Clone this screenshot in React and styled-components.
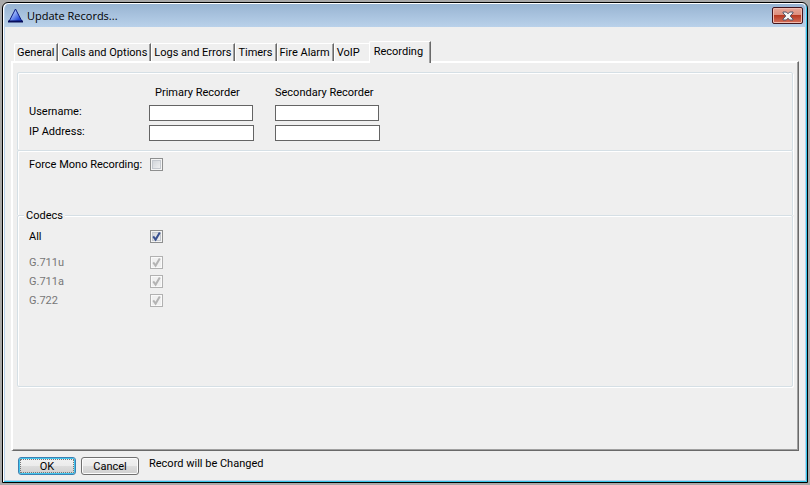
import { useState } from "react";
import styled, { createGlobalStyle, css } from "styled-components";

const TABS = [
  "General",
  "Calls and Options",
  "Logs and Errors",
  "Timers",
  "Fire Alarm",
  "VoIP",
  "Recording",
];

const CODECS = ["G.711u", "G.711a", "G.722"];

//checkbox with the tick drawn over the real input
const Check = ({ id, ...props }) => (
  <CheckBox>
    <CheckInput type="checkbox" id={id} {...props} />
    <Tick viewBox="0 0 13 13" aria-hidden="true">
      <path d="M3.2 6.4 L5.6 9.6 L9.8 2.6" />
    </Tick>
  </CheckBox>
);

const App = () => {
  const [tab, setTab] = useState("Recording");
  const [mono, setMono] = useState(false);
  const [all, setAll] = useState(true);

  return (
    <>
      <GlobalStyle />
      <Desktop>
        <Window>
          <TitleBar>
            <Logo viewBox="0 0 15 15" aria-hidden="true">
              <defs>
                <linearGradient id="logo" x1="0" y1="0" x2="1" y2="1">
                  <stop offset="0.3" stopColor="#a9c4ff" />
                  <stop offset="0.8" stopColor="#2449d8" />
                </linearGradient>
              </defs>
              <path d="M7.5 1 L14 13.5 H1 Z" fill="url(#logo)" />
              <path d="M7.5 1 L14 13.5 H1 Z" fill="none" stroke="#0a1a80" />
              <path d="M0 13.5 H15" stroke="#060e5c" strokeWidth="2" />
            </Logo>
            <Title>Update Records...</Title>
            <CloseButton type="button" aria-label="Close">
              <svg width="12" height="10" viewBox="0 0 12 10">
                <path
                  d="M1 1 H4.3 L6 2.8 L7.7 1 H11 V2 L8.2 5 L11 8 V9 H7.7 L6 7.2 L4.3 9 H1 V8 L3.8 5 L1 2 Z"
                  fill="#f4f4f4"
                  stroke="#54576a"
                />
              </svg>
            </CloseButton>
          </TitleBar>

          <TabList role="tablist">
            {TABS.map((name) => (
              <Tab
                key={name}
                type="button"
                role="tab"
                aria-selected={tab === name}
                $active={tab === name}
                onClick={() => setTab(name)}
              >
                {name}
              </Tab>
            ))}
          </TabList>

          <Panel role="tabpanel">
            <Group>
              <RecorderGrid>
                <span />
                <ColumnTitle>Primary Recorder</ColumnTitle>
                <ColumnTitle>Secondary Recorder</ColumnTitle>
                <Label htmlFor="user1">Username:</Label>
                <Field id="user1" />
                <Field id="user2" aria-label="Secondary username" />
                <Label htmlFor="ip1">IP Address:</Label>
                <Field id="ip1" $wide />
                <Field id="ip2" $wide aria-label="Secondary IP address" />
              </RecorderGrid>
            </Group>

            <MonoGroup>
              <Row>
                <Label htmlFor="mono">Force Mono Recording:</Label>
                <Check
                  id="mono"
                  checked={mono}
                  onChange={() => setMono(!mono)}
                />
              </Row>
            </MonoGroup>

            <CodecGroup>
              <Legend>Codecs</Legend>
              <Row>
                <Label htmlFor="all">All</Label>
                <Check id="all" checked={all} onChange={() => setAll(!all)} />
              </Row>
              <CodecList>
                {CODECS.map((codec) => (
                  <Row key={codec}>
                    <Label htmlFor={codec} $disabled>
                      {codec}
                    </Label>
                    <Check id={codec} checked disabled readOnly />
                  </Row>
                ))}
              </CodecList>
            </CodecGroup>
          </Panel>

          <Footer>
            <Button type="submit" $primary>
              OK
            </Button>
            <Button type="button">Cancel</Button>
            <Status>Record will be Changed</Status>
          </Footer>
        </Window>
      </Desktop>
    </>
  );
};
export default App;

const GlobalStyle = createGlobalStyle`
  * {
    box-sizing: border-box;
  }
  body {
    margin: 0;
    font-family: Roboto, "Liberation Sans", sans-serif;
    font-size: 11px;
    line-height: 13px;
    color: #000;
  }
  button, input {
    font: inherit;
    color: inherit;
  }
`;

const Desktop = styled.div`
  display: flex;
  min-height: 100vh;
  padding: 2px;
  background-color: #a9a9a9;
`;

//black frame, with a thin glass edge inside it
const Window = styled.main`
  flex: 1;
  display: flex;
  flex-direction: column;
  border: 1px solid #000;
  border-radius: 6px 6px 0 0;
  padding: 1px 2px 2px;
  background-color: #efefef;
  box-shadow:
    inset 1px 1px 0 #fff,
    inset -1px -1px 0 #35c5e8,
    inset 2px 0 0 #b9d1ea,
    inset -2px -2px 0 #b9d1ea;
`;

const TitleBar = styled.header`
  display: flex;
  align-items: center;
  height: 23px;
  padding: 0 2px 0 3px;
  border-radius: 4px 4px 0 0;
  background: linear-gradient(#98b4d2, #b9d1ea);
`;

const Logo = styled.svg`
  width: 15px;
  height: 15px;
`;

const Title = styled.h1`
  flex: 1;
  margin: 0 0 0 4px;
  font-family: "Open Sans", "Noto Sans", sans-serif;
  font-size: 11px;
  font-weight: 400;
  line-height: 16px;
`;

const CloseButton = styled.button`
  display: flex;
  align-items: center;
  justify-content: center;
  width: 31px;
  height: 17px;
  padding: 0;
  border: 1px solid #43151d;
  border-radius: 2px;
  background: linear-gradient(#e8a798, #dc8d7c 48%, #b83a22 50%, #d4705c);
  box-shadow: inset 0 0 0 1px #f0bcb0;
`;

const TabList = styled.div`
  display: flex;
  align-items: flex-end;
  padding: 14px 6px 0 9px;
`;

const Tab = styled.button`
  min-width: 37px;
  height: 18px;
  padding: 0 3px 0 2px;
  border: 1px solid #fff;
  border-right-color: #696969;
  border-bottom: 0;
  border-radius: 2px 0 0 0;
  background-color: #efefef;
  box-shadow: inset -1px 0 0 #a0a0a0;
  text-align: left;
  white-space: nowrap;

  ${(props) =>
    props.$active &&
    css`
      height: 22px;
      margin: 0 0 -2px -2px;
      padding: 0 7px 2px 4px;
      z-index: 1;
    `}
`;

const Panel = styled.section`
  flex: 1;
  margin: 0 6px;
  padding: 10px 5px 10px 4px;
  border: 1px solid #696969;
  border-top-color: #fff;
  border-left: 2px solid #fff;
  box-shadow: inset -1px -1px 0 #a0a0a0, inset 0 1px 0 #fff;
`;

const etched = css`
  border: 1px solid #d5dfe5;
  border-radius: 2px;
  box-shadow: 1px 1px 0 #fff, inset 1px 1px 0 #fff;
`;

const Group = styled.div`
  ${etched}
  padding: 13px 11px 9px;
`;

const MonoGroup = styled.div`
  ${etched}
  margin-top: -1px;
  height: 65px;
  padding: 7px 11px;
  border-bottom: 0;
  border-radius: 2px 2px 0 0;
  box-shadow: 1px 0 0 #fff, inset 1px 1px 0 #fff;
`;

//the legend is centred on the top line, so the box starts above it
const CodecGroup = styled.fieldset`
  ${etched}
  height: 178px;
  margin: -6px 0 0;
  padding: 8px 11px;
`;

const Legend = styled.legend`
  margin-left: -5px;
  padding: 0 2px;
  background-color: #efefef;
`;

const RecorderGrid = styled.div`
  display: grid;
  grid-template-columns: 120px 126px 126px;
  grid-template-rows: 15px 16px 16px;
  row-gap: 4px;
  align-items: start;
`;

const ColumnTitle = styled.span`
  padding-left: 6px;

  & + & {
    padding-left: 0;
  }
`;

const Label = styled.label`
  color: ${(props) => (props.$disabled ? "#777" : "#000")};
`;

const Field = styled.input`
  width: ${(props) => (props.$wide ? "105px" : "104px")};
  height: 16px;
  padding: 0 3px;
  border: 1px solid #646464;
  background-color: #fff;
`;

const Row = styled.div`
  display: grid;
  grid-template-columns: 121px 13px;
  align-items: center;
`;

const CodecList = styled.div`
  display: grid;
  gap: 6px;
  margin-top: 13px;
`;

const CheckBox = styled.span`
  display: grid;
  width: 13px;
  height: 13px;

  > * {
    grid-area: 1 / 1;
  }
`;

const Tick = styled.svg`
  width: 13px;
  height: 13px;
  visibility: hidden;
  pointer-events: none;
  fill: none;
  stroke: #39508f;
  stroke-width: 2;
`;

const CheckInput = styled.input`
  appearance: none;
  width: 13px;
  height: 13px;
  margin: 0;
  border: 1px solid #8e8f8f;
  background: linear-gradient(135deg, #cbcfd5, #f6f6f6);
  box-shadow: inset 0 0 0 1px #f4f4f4, inset 0 0 0 2px #c4c8ce;

  &:checked + ${Tick} {
    visibility: visible;
  }
  &:disabled {
    border-color: #b1b1b1;
    background: #f0f0f0;
    box-shadow: inset 0 0 0 1px #fafafa;
  }
  &:disabled + ${Tick} {
    stroke: #b4b4b4;
  }
`;

const Footer = styled.footer`
  display: flex;
  gap: 5px;
  padding: 6px 13px 5px;
`;

const Button = styled.button`
  width: 58px;
  height: 18px;
  padding: 0;
  border: 1px solid #707070;
  border-radius: 3px;
  background: linear-gradient(#f2f2f2, #ebebeb 50%, #dddddd 50%, #cfcfcf);
  box-shadow: inset 0 0 0 1px #fcfcfc;

  ${(props) =>
    props.$primary &&
    css`
      border-color: #3c7fb1;
      box-shadow: inset 0 0 0 1px #43c6ee;
      outline: 1px dotted #777;
      outline-offset: -3px;
    `}
`;

const Status = styled.span`
  margin-left: 5px;
`;
